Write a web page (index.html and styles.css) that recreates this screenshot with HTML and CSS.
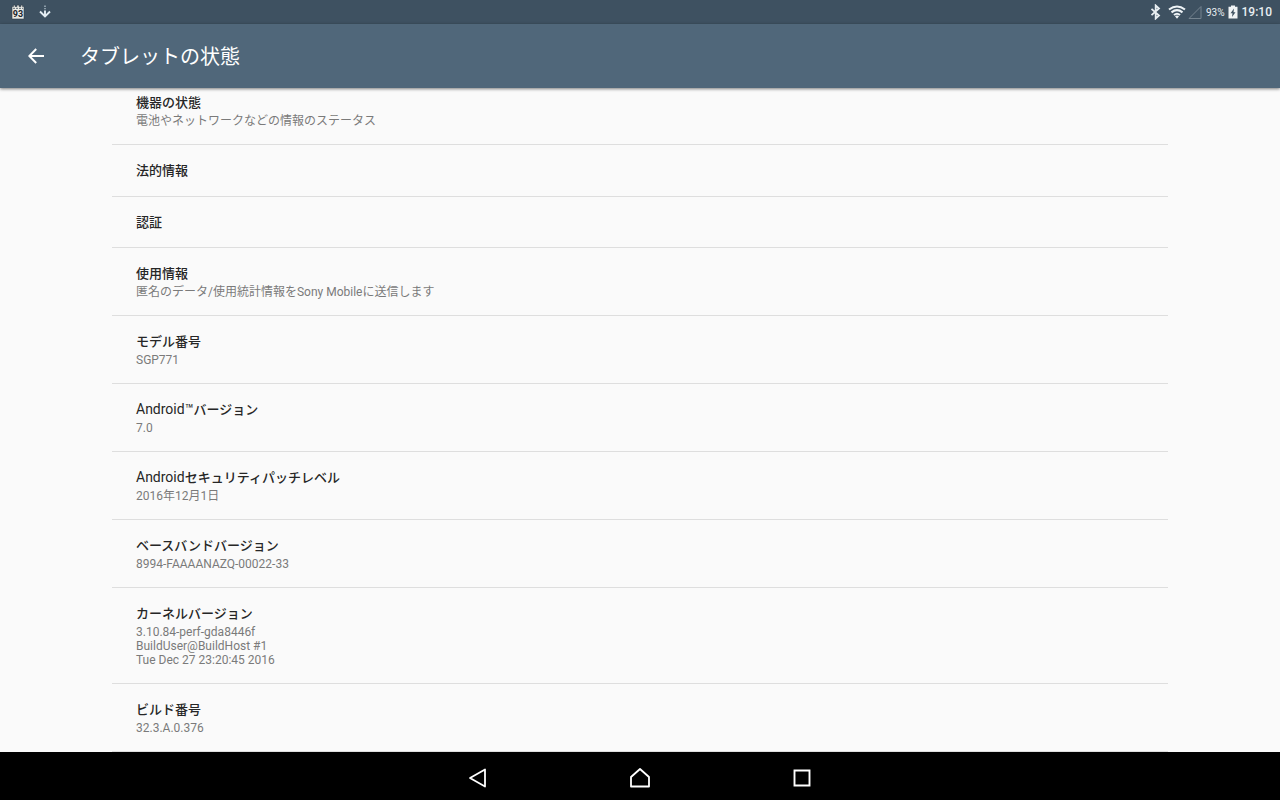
FILE: index.html
```
<!DOCTYPE html>
<html lang="ja">
<head>
<meta charset="utf-8">
<meta name="viewport" content="width=device-width, initial-scale=1">
<title>タブレットの状態</title>
<link rel="stylesheet" href="styles.css">
</head>
<body>
<div class="screen">
  <div class="status-bar">
    <div class="status-group notifications">
      <svg viewBox="0 0 16 16" width="16" height="16" aria-hidden="true">
        <path d="M2 2.500h1.500V1H5v1.500h2V1h2v1.500h2V1h1.500v1.500H14V15H2z" fill="#e9e9e4" stroke="#34414c" stroke-width="0.600"/>
        <path d="M3 4.300h10" stroke="#5d6973" stroke-width="1" stroke-dasharray="2 1"/>
        <text class="icon-text" x="8" y="12.500" text-anchor="middle">93</text>
      </svg>
      <svg viewBox="0 0 14 14" width="14" height="14" aria-hidden="true">
        <path d="M7 5.500v6.500M2 6.500l5 5 5-5" fill="none" stroke="#e4edf3" stroke-width="1.900"/>
        <path d="M7 0.500v1.500M7 3v1.300" stroke="#a4b4bf" stroke-width="1.500"/>
      </svg>
    </div>
    <div class="status-group">
      <svg viewBox="0 0 12 16" width="12" height="16" aria-hidden="true">
        <path d="M1.500 4.800l7.500 6.700L5.700 14.500v-13l3.300 3L1.500 11.200" fill="none" stroke="#e8eef2" stroke-width="1.800"/>
      </svg>
      <svg class="icon-wifi" viewBox="0 0 18 14" width="18" height="14" aria-hidden="true">
        <path d="M1 4.500Q9-1.500 17 4.500M3.500 7.300Q9 3 14.500 7.300M6 10Q9 7.500 12 10" fill="none" stroke="#eef3f6" stroke-width="2.100"/>
        <path d="M7 11.200Q9 9.700 11 11.200L9 13.700z" fill="#eef3f6"/>
      </svg>
      <svg class="icon-signal" viewBox="0 0 14 14" width="14" height="14" aria-hidden="true">
        <path d="M1 13.500h12v-12z" fill="none" stroke="#74838f"/>
      </svg>
      <span class="battery-level">93%</span>
      <svg class="icon-battery" viewBox="0 0 10 14" width="10" height="14" aria-hidden="true">
        <path d="M0.500 1.800H3V0.500h4v1.300h2.500v11.700h-9z" fill="#f0f4f6"/>
        <path d="M6 3.500L2.500 8.200h2L4 12l3.500-4.800h-2z" fill="#3e5161"/>
      </svg>
      <span class="clock">19:10</span>
    </div>
  </div>

  <header class="app-bar">
    <button class="back-button" type="button" aria-label="戻る">
      <svg viewBox="0 0 16 16" width="16" height="16" aria-hidden="true">
        <path d="M16 8H1.500M8.200 1L1.300 8l6.900 7" fill="none" stroke="#fff" stroke-width="2"/>
      </svg>
    </button>
    <h1 class="app-title">タブレットの状態</h1>
  </header>

  <main class="content">
    <ul class="settings">
      <li class="item"><h2 class="item-title">機器の状態</h2><p class="item-summary">電池やネットワークなどの情報のステータス</p></li>
      <li class="item item-single"><h2 class="item-title">法的情報</h2></li>
      <li class="item item-single"><h2 class="item-title">認証</h2></li>
      <li class="item"><h2 class="item-title">使用情報</h2><p class="item-summary">匿名のデータ/使用統計情報をSony Mobileに送信します</p></li>
      <li class="item"><h2 class="item-title">モデル番号</h2><p class="item-summary">SGP771</p></li>
      <li class="item"><h2 class="item-title"><span class="latin">Android™</span>バージョン</h2><p class="item-summary">7.0</p></li>
      <li class="item"><h2 class="item-title"><span class="latin">Android</span>セキュリティパッチレベル</h2><p class="item-summary">2016年12月1日</p></li>
      <li class="item"><h2 class="item-title">ベースバンドバージョン</h2><p class="item-summary">8994-FAAAANAZQ-00022-33</p></li>
      <li class="item"><h2 class="item-title">カーネルバージョン</h2><p class="item-summary">3.10.84-perf-gda8446f<br>BuildUser@BuildHost #1<br>Tue Dec 27 23:20:45 2016</p></li>
      <li class="item"><h2 class="item-title">ビルド番号</h2><p class="item-summary">32.3.A.0.376</p></li>
    </ul>
  </main>

  <nav class="nav-bar">
    <button class="nav-button" type="button" aria-label="戻る">
      <svg viewBox="0 0 20 20" width="20" height="20" aria-hidden="true"><path d="M17 1.500v17L2 10z" fill="none" stroke="#fff" stroke-width="1.800" stroke-linejoin="round"/></svg>
    </button>
    <button class="nav-button" type="button" aria-label="ホーム">
      <svg viewBox="0 0 20 20" width="20" height="20" aria-hidden="true"><path d="M10 1l9 8v9.500H1V9z" fill="none" stroke="#fff" stroke-width="1.800" stroke-linejoin="round"/></svg>
    </button>
    <button class="nav-button" type="button" aria-label="最近使ったアプリ">
      <svg viewBox="0 0 20 20" width="20" height="20" aria-hidden="true"><path d="M2.500 2.500h15v15h-15z" fill="none" stroke="#fff" stroke-width="1.900"/></svg>
    </button>
  </nav>
</div>
</body>
</html>
```
FILE: styles.css
```
* {
  box-sizing: border-box;
}

body,
h1,
h2,
p,
ul {
  margin: 0;
  padding: 0;
}

body {
  background: #fafafa;
  font-family: Roboto, "Noto Sans CJK JP", sans-serif;
}

svg {
  display: block;
  flex: none;
}

button {
  display: flex;
  align-items: center;
  justify-content: center;
  padding: 0;
  border: 0;
  background: transparent;
}

.screen {
  display: flex;
  flex-direction: column;
  height: 100vh;
}

.status-bar {
  display: flex;
  flex: none;
  align-items: center;
  justify-content: space-between;
  height: 24px;
  padding: 0 8px 0 10px;
  background: #3e5161;
  color: #e8eef2;
}

.status-group {
  display: flex;
  align-items: center;
}

.notifications {
  gap: 12px;
}

.icon-text {
  fill: #20252a;
  font-size: 9px;
  font-weight: 700;
}

.icon-wifi {
  margin-left: 6px;
}

.icon-signal {
  margin: 0 4px 0 2px;
}

.battery-level {
  font-size: 10px;
}

.icon-battery {
  margin: 0 4px 0 3px;
}

.clock {
  font-size: 12px;
  font-weight: 500;
}

.app-bar {
  position: relative;
  display: flex;
  flex: none;
  align-items: center;
  gap: 20px;
  height: 64px;
  padding: 0 12px;
  background: #50677a;
  box-shadow: 0 1px 3px rgba(0, 0, 0, 0.5);
}

.back-button {
  width: 48px;
  height: 48px;
}

.app-title {
  padding-top: 2px;
  color: #fff;
  font-size: 20px;
  font-weight: 400;
  line-height: 28px;
}

.content {
  flex: 1;
  min-height: 0;
  overflow: hidden;
}

.settings {
  margin: 0 112px;
  list-style: none;
}

.item {
  padding: 16px 24px;
  border-bottom: 1px solid #dedede;
}

.item:first-child {
  padding-top: 5px;
}

.item-single {
  padding-bottom: 15px;
}

.item-single + .item-single {
  padding-bottom: 14px;
}

.item-title {
  color: #262626;
  font-size: 13px;
  font-weight: 500;
  line-height: 20px;
}

.latin {
  font-size: 14px;
  font-weight: 400;
  line-height: 1;
}

.item-summary {
  margin-top: 1px;
  color: #7a7a7a;
  font-size: 12px;
  line-height: 14px;
}

.nav-bar {
  display: flex;
  flex: none;
  align-items: center;
  justify-content: center;
  gap: 98px;
  height: 48px;
  padding-top: 3px;
  background: #000;
}

.nav-button {
  width: 64px;
  height: 44px;
}
```
